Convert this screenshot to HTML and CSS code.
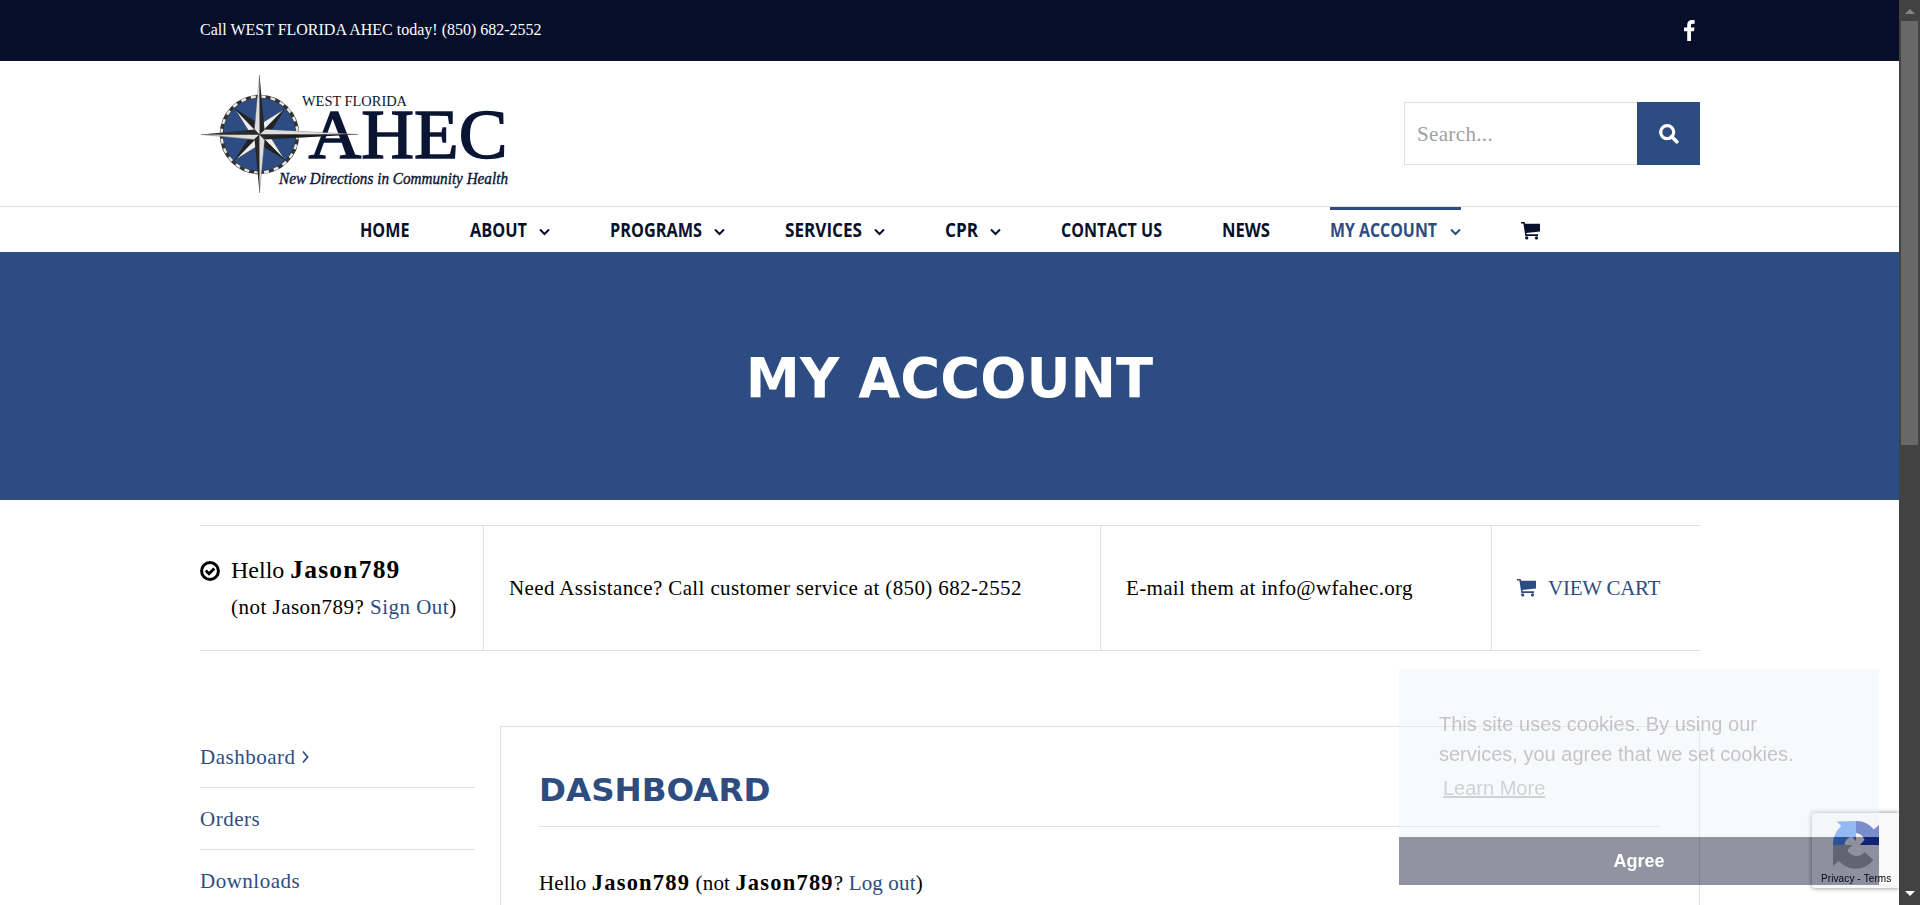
FILE: index.html
```html
<!DOCTYPE html>
<html lang="en">
<head>
<meta charset="utf-8">
<title>My Account</title>
<link rel="stylesheet" href="styles.css">
</head>
<body>
<svg class="defs" aria-hidden="true">
  <symbol id="chevron" viewBox="0 0 11 8"><path d="M1 1.500 5.500 6 10 1.500" fill="none" stroke="currentColor" stroke-width="2"/></symbol>
  <symbol id="cart" viewBox="0 0 19 18"><path d="M0 0h3.700l.4 1.800H19v7.700L5.300 11l.3 1.300H17v1.600H4.300L2.400 1.500H0z" fill="currentColor"/><circle cx="5.700" cy="15.900" r="1.600" fill="currentColor"/><circle cx="15.500" cy="15.900" r="1.600" fill="currentColor"/></symbol>
</svg>
<div class="page">
  <div class="topbar"><div class="wrap topbar-inner">
    <span class="call">Call WEST FLORIDA AHEC today! (850) 682-2552</span>
    <svg class="fb" viewBox="0 0 11 21"><path d="M10.700.2v3.500H8.800C7.300 3.700 7 4.400 7 5.500v2h3.500l-.5 3.700H7V21H3.200v-9.800H0V7.500h3.200V4.900C3.200 1.700 5.100 0 8 0c1.300 0 2.400.1 2.700.2z" fill="#fff"/></svg>
  </div></div>

  <header class="wrap header">
    <svg class="logo" viewBox="200 72 312 124">
      <defs>
        <linearGradient id="dk" x1="0" x2="1"><stop offset="0" stop-color="#333"/><stop offset="1" stop-color="#101216"/></linearGradient>
        <linearGradient id="lt" x1="0" x2="1"><stop offset="0" stop-color="#c8c8ca"/><stop offset=".6" stop-color="#f5f5f5"/><stop offset="1" stop-color="#777"/></linearGradient>
      </defs>
      <circle cx="259.500" cy="134.500" r="38" fill="#2d4d82" stroke="#333" stroke-width="3.500"/>
      <circle cx="259.500" cy="134.500" r="38" fill="none" stroke="#e8e8e4" stroke-width="2.500" stroke-dasharray="5 5"/>
      <text class="logo-name" x="308.500" y="157.500" textLength="199" lengthAdjust="spacingAndGlyphs">AHEC</text>
      <text class="logo-top" x="302" y="105.500" textLength="105" lengthAdjust="spacingAndGlyphs">WEST FLORIDA</text>
      <text class="logo-tag" x="279" y="183.500" textLength="229" lengthAdjust="spacingAndGlyphs">New Directions in Community Health</text>
      <g stroke="#222" stroke-width=".4">
        <path d="M259.500 134.500 235 109l18 29zM259.500 134.500l25-25.500-29 18zM259.500 134.500l25 25-18-29zM259.500 134.500 235 160l29-18z" fill="#eee"/>
        <path d="M259.500 134.500 235 109l29 18zM259.500 134.500l25-25.500-18 29zM259.500 134.500l25 25-29-18zM259.500 134.500 235 160l18-29z" fill="#222"/>
      </g>
      <path d="M259.500 75l-5 54 5 6zM358 134.500l-93-5-5.500 5zM259.500 193l5-53-5-5.500zM201 134.500l53 5 5.500-5z" fill="url(#lt)" stroke="#777" stroke-width=".5"/>
      <path d="M259.500 75l5 54.500-5 5zM358 134.500l-93 5-5.500-5zM259.500 193l-5-53.500 5-5zM201 134.500l53-5 5.500 5z" fill="url(#dk)"/>
      <path d="M259 82l-3.500 46 4 6zM345 134l-80-4-4 4zM259.800 186l3.500-46-3.800-5z" fill="#ddd"/>
    </svg>
    <div class="search"><div class="search-input">Search...</div><div class="search-btn">
      <svg viewBox="0 0 20 20" width="20" height="20"><circle cx="8.200" cy="8.200" r="6.500" fill="none" stroke="#fff" stroke-width="3.200"/><path d="m12.500 12.500 5.300 5.300" stroke="#fff" stroke-width="3.600" stroke-linecap="round"/></svg>
    </div></div>
  </header>

  <nav class="nav">
    <a class="item"><svg class="label" width="50" height="24"><text x="0" y="18" textLength="49.500" lengthAdjust="spacingAndGlyphs">HOME</text></svg></a>
    <a class="item"><svg class="label" width="57" height="24"><text x="0" y="18" textLength="57" lengthAdjust="spacingAndGlyphs">ABOUT</text></svg><svg class="chev"><use href="#chevron"/></svg></a>
    <a class="item"><svg class="label" width="92" height="24"><text x="0" y="18" textLength="92" lengthAdjust="spacingAndGlyphs">PROGRAMS</text></svg><svg class="chev"><use href="#chevron"/></svg></a>
    <a class="item"><svg class="label" width="77" height="24"><text x="0" y="18" textLength="77" lengthAdjust="spacingAndGlyphs">SERVICES</text></svg><svg class="chev"><use href="#chevron"/></svg></a>
    <a class="item"><svg class="label" width="33" height="24"><text x="0" y="18" textLength="33" lengthAdjust="spacingAndGlyphs">CPR</text></svg><svg class="chev"><use href="#chevron"/></svg></a>
    <a class="item"><svg class="label" width="101" height="24"><text x="0" y="18" textLength="101" lengthAdjust="spacingAndGlyphs">CONTACT US</text></svg></a>
    <a class="item"><svg class="label" width="48" height="24"><text x="0" y="18" textLength="48" lengthAdjust="spacingAndGlyphs">NEWS</text></svg></a>
    <a class="item active"><svg class="label" width="108" height="24"><text x="0" y="18" textLength="107" lengthAdjust="spacingAndGlyphs">MY ACCOUNT</text></svg><svg class="chev"><use href="#chevron"/></svg></a>
    <a class="item"><svg class="cart"><use href="#cart"/></svg></a>
  </nav>

  <div class="banner"><h1>MY ACCOUNT</h1></div>

  <section class="wrap strip">
    <div class="cell hello">
      <svg class="check" viewBox="0 0 20 20"><circle cx="10" cy="10" r="8.400" fill="none" stroke="#000" stroke-width="3"/><path d="m5.800 9.600 3.200 3.200 5.300-5.300" fill="none" stroke="#000" stroke-width="2.800"/></svg>
      <div><p class="hello-name"><span>Hello <b>Jason789</b></span></p><p class="hello-out"><span>(not Jason789? <a>Sign Out</a>)</span></p></div>
    </div>
    <div class="cell need"><span>Need Assistance? Call customer service at (850) 682-2552</span></div>
    <div class="cell mail"><span>E-mail them at info@wfahec.org</span></div>
    <div class="cell view"><a><svg class="cart"><use href="#cart"/></svg><span>VIEW CART</span></a></div>
  </section>

  <div class="wrap columns">
    <aside class="side">
      <a><span>Dashboard</span><svg width="7" height="14" viewBox="0 0 7 14"><path d="m1 1.500 4.600 5.500L1 12.500" fill="none" stroke="currentColor" stroke-width="1.700"/></svg></a>
      <a><span>Orders</span></a>
      <a><span>Downloads</span></a>
    </aside>
    <main class="panel">
      <h2><span>DASHBOARD</span></h2>
      <p><span>Hello <b>Jason789</b> (not <b>Jason789</b>? <a>Log out</a>)</span></p>
    </main>
  </div>
</div>

<div class="captcha">
  <svg width="46" height="48" viewBox="0 0 48 48" preserveAspectRatio="none">
    <path d="M24 0v20l-4.500-4.500A10 10 0 0 0 12 24H0C0 16 3 10 8.500 5L4 .5z" fill="#4a8af4"/>
    <path d="M24 0c8 0 14 3 18.500 8.500L48 4v20H28l5-5a11 11 0 0 0-9-7z" fill="#1c3aa9"/>
    <path d="M0 24h20l-5 5c3 6 12 9 18 2l9 8C33 50 17 51 6 40l-6 5z" fill="#ababab"/>
  </svg>
  <span>Privacy&nbsp;-&nbsp;Terms</span>
</div>

<div class="cookie">
  <div class="cookie-msg"><p>This site uses cookies. By using our<br>services, you agree that we set cookies.</p><a>Learn More</a></div>
  <div class="agree">Agree</div>
</div>

<div class="scrollbar"><i class="up"></i><div class="thumb"></div><i class="down"></i></div>
</body>
</html>
```
FILE: styles.css
```css
* { box-sizing: border-box; }
html, body { margin: 0; height: 905px; overflow: hidden; }
body { background: #fff; color: #000; font: 20px/36px "Liberation Serif", serif; }
p, h1, h2 { margin: 0; }
a { color: #2d4d82; }
svg { display: block; flex: none; }
span { white-space: nowrap; }
.defs { position: absolute; width: 0; height: 0; }
.page { width: 1899px; height: 905px; overflow: hidden; }
.wrap { width: 1500px; margin-left: 200px; }

.topbar { height: 61px; background: #060e29; color: #fff; }
.topbar-inner { height: 61px; display: flex; align-items: center; justify-content: space-between; }
.call { font-size: 16px; padding-bottom: 2px; }
.fb { width: 11px; height: 21px; margin-right: 5px; }

.header { height: 145px; display: flex; justify-content: space-between; padding-top: 11px; }
.logo { width: 312px; height: 124px; overflow: visible; }
.logo text { fill: #0a1533; font-family: "Liberation Serif", serif; }
.logo .logo-name { font-size: 69px; stroke: #0a1533; stroke-width: 1.400px; }
.logo .logo-top { font-size: 15px; }
.logo .logo-tag { font-size: 17.500px; font-style: italic; stroke: #0a1533; stroke-width: .4px; }
.search { display: flex; height: 63px; margin-top: 30px; }
.search-input { width: 233px; border: 1px solid #e0e0e0; border-right: 0; padding: 13px 12px; color: #a0a0a4; font-size: 21px; letter-spacing: .35px; }
.search-btn { width: 63px; background: #2d4d82; display: grid; place-items: center; }

.nav { height: 46px; border-top: 1px solid #e0e0e0; padding-left: 360px; display: flex; gap: 60px; color: #08102b; }
.item { display: flex; align-items: center; gap: 12px; height: 45px; border-top: 3px solid transparent; color: #08102b; }
.item.active { border-color: #2d4d82; color: #2d4d82; }
.label { overflow: visible; margin-bottom: 1px; }
.label text { font: bold 19px "Open Sans", sans-serif; fill: currentColor; }
.chev { width: 11px; height: 8px; margin-top: 1px; }
.cart { width: 19px; height: 18px; }

.banner { height: 248px; background: #2d4d82; color: #fff; display: grid; place-items: center; padding-top: 5px; }
h1 { font: bold 54.400px/64px "DejaVu Sans", sans-serif; }

.strip { height: 126px; margin-top: 25px; border-top: 1px solid #e0e0e0; border-bottom: 1px solid #e0e0e0; display: flex; }
.cell { display: flex; align-items: center; border-left: 1px solid #e0e0e0; padding-left: 25px; font-size: 21px; }
.hello { width: 283px; border: 0; padding: 0; align-items: flex-start; padding-top: 26px; }
.hello .check { width: 20px; height: 20px; margin: 9px 11px 0 0; }
.hello-name { font-size: 24px; height: 36px; }
.hello-name b { font-size: 25.500px; letter-spacing: 1.200px; }
.hello-out { font-size: 21px; letter-spacing: .48px; margin-top: 1px; }
.need { width: 617px; letter-spacing: .38px; }
.mail { width: 391px; letter-spacing: .34px; }
.view { flex: 1; }
.view a { display: flex; align-items: center; gap: 12px; }
.view span { letter-spacing: -.25px; }

.columns { display: flex; margin-top: 75px; gap: 25px; }
.side { width: 275px; font-size: 21px; letter-spacing: .5px; }
.side a { display: flex; align-items: center; gap: 7px; height: 62px; border-bottom: 1px solid #e0e0e0; }
.panel { width: 1200px; height: 400px; border: 1px solid #e0e0e0; padding: 38px; }
h2 { height: 62px; border-bottom: 1px solid #e0e0e0; color: #2d4d82; font: bold 32.500px/50px "DejaVu Sans", sans-serif; }
.panel p { margin-top: 38px; font-size: 21px; letter-spacing: .15px; }
.panel b { font-size: 22.500px; letter-spacing: 1.200px; }

.captcha { position: fixed; left: 1812px; top: 813px; width: 87px; height: 75px; background: #f9f9f9; box-shadow: 0 0 5px #808080; border-radius: 3px 0 0 3px; padding: 8px 0 0 9px; clip-path: inset(-8px 0 -8px -8px); }
.captcha svg { margin-left: 12px; }
.captcha span { display: block; margin-top: 2px; font: 10px/16px "Liberation Sans", sans-serif; letter-spacing: .1px; }

.cookie { position: fixed; left: 1399px; top: 669px; width: 480px; height: 216px; font: 20px/30px "Liberation Sans", sans-serif; }
.cookie-msg { height: 168px; padding: 40px 40px 0; background: rgba(237, 241, 245, .45); color: rgba(90, 85, 95, .32); }
.cookie-msg a { display: inline-block; margin: 4px 0 0 4px; color: rgba(90, 90, 90, .25); text-decoration: underline; }
.agree { height: 48px; background: rgba(5, 8, 42, .44); color: #fff; text-align: center; font-weight: bold; font-size: 18px; line-height: 48px; }

.scrollbar { position: fixed; left: 1899px; top: 0; width: 21px; height: 905px; background: #424242; display: flex; flex-direction: column; align-items: center; padding: 9px 0; }
.thumb { width: 17px; height: 424px; margin-top: 7px; background: #686868; }
.up, .down { border: 5px solid transparent; border-top: 0; border-bottom-color: #858585; }
.down { margin-top: auto; border-top: 5px solid #fff; border-bottom: 0; }
```
